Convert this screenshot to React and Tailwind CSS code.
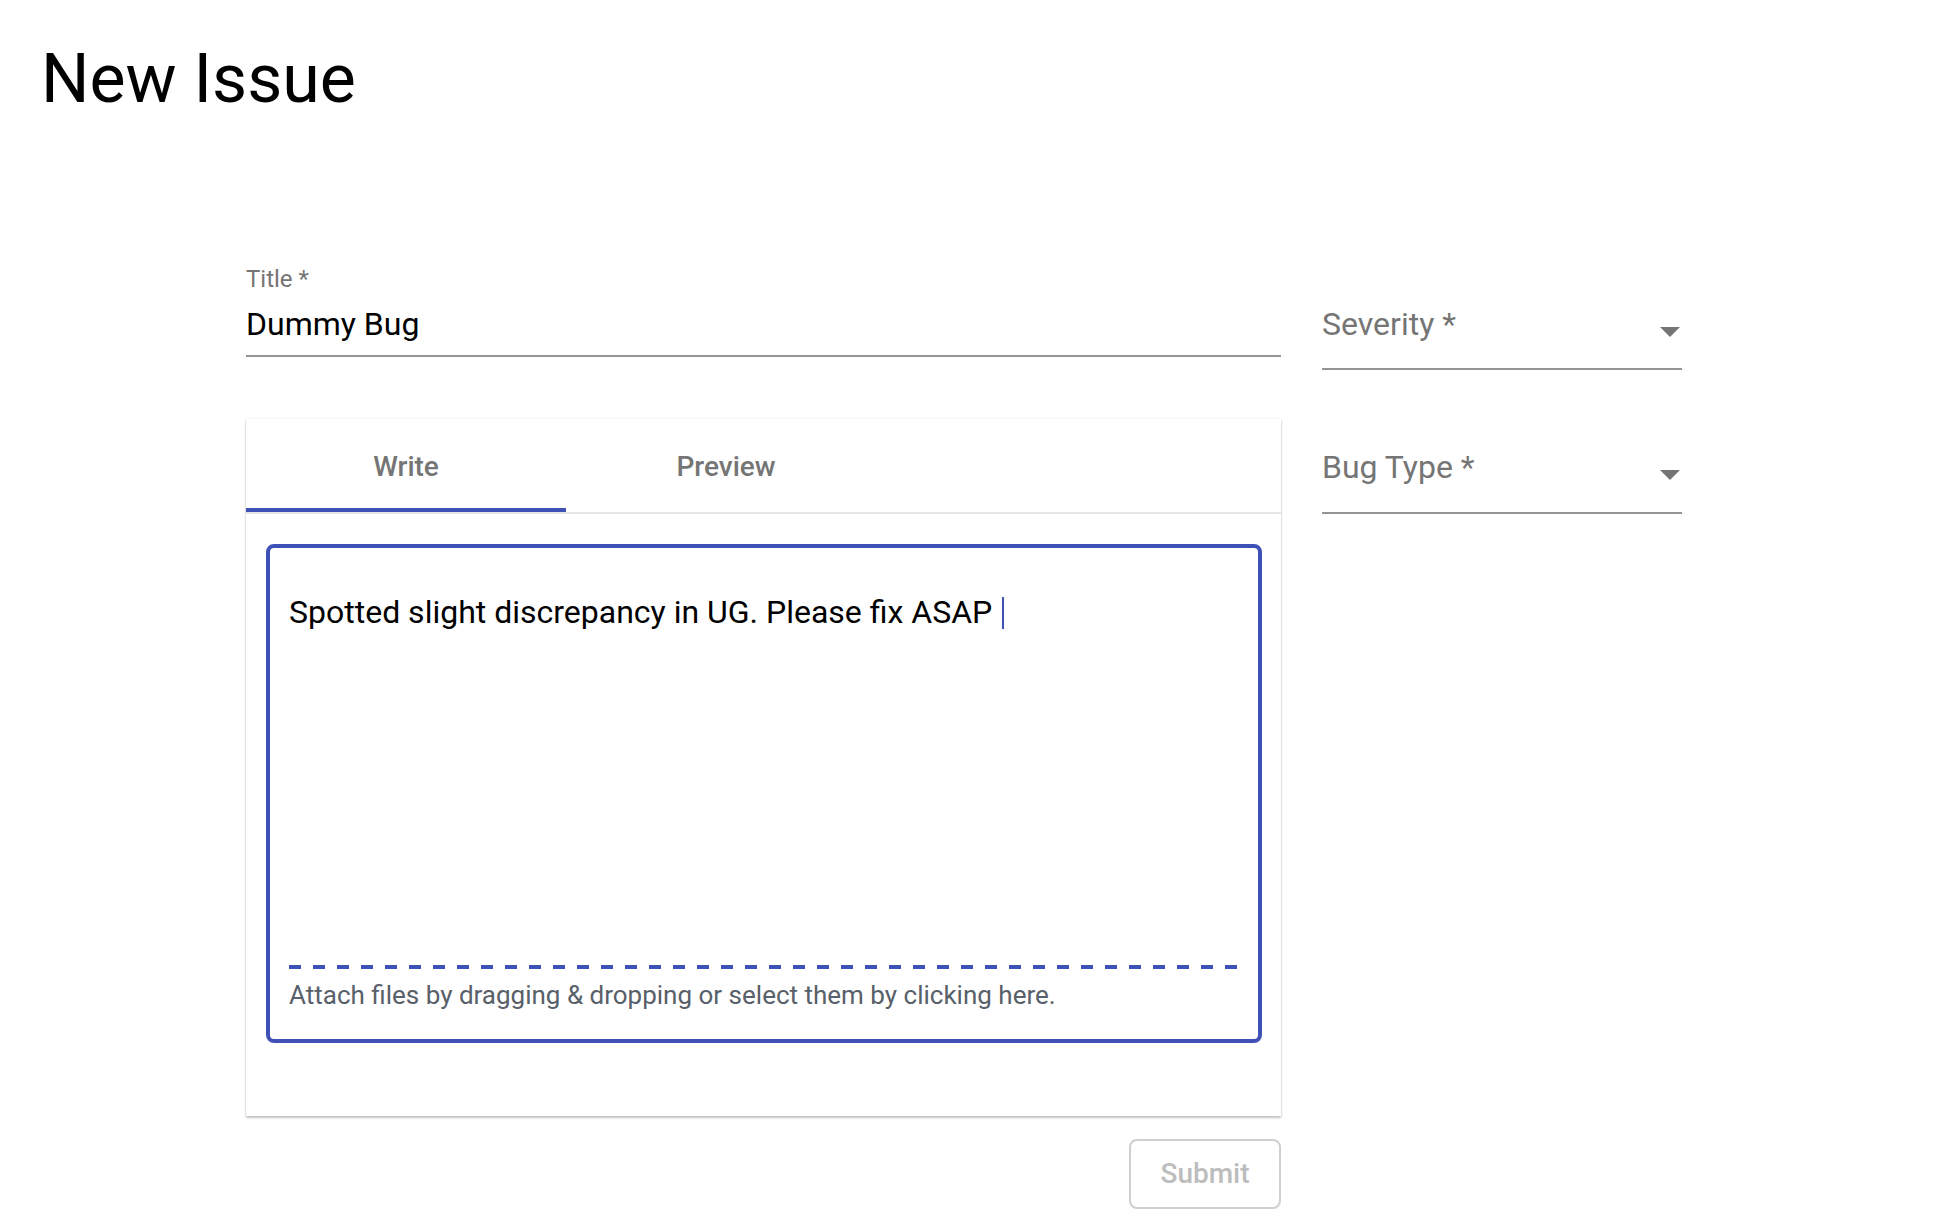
import { useState } from 'react';

function ArrowDrop() {
  return (
    <svg width="20" height="10" viewBox="0 0 20 10" className="absolute right-[2px]">
      <path d="M0 0 L20 0 L10 10 Z" fill="#757575" />
    </svg>
  );
}

export default function App() {
  const [tab, setTab] = useState('write');

  return (
    <div className="min-h-screen bg-white font-['Roboto','Liberation_Sans',sans-serif] text-black">
      {/* Header */}
      <h1 className="pl-[41px] pt-[39px] text-[68px] leading-[80px] font-normal">New Issue</h1>

      <div className="flex pl-[246px] mt-[148px]">
        {/* Left column */}
        <div className="w-[1035px]">
          {/* Title field */}
          <div>
            <div className="text-[24px] leading-[24px] text-[#757575]">Title *</div>
            <div className="mt-[14px] pb-[12px] border-b-2 border-[#949494] text-[32px] leading-[38px]">
              Dummy Bug
            </div>
          </div>

          {/* Editor card */}
          <div className="mt-[62px] bg-white pb-[73px] shadow-[0_2px_2px_rgba(0,0,0,0.22),0_0_2px_rgba(0,0,0,0.12)]">
            <div className="flex h-[95px] border-b-2 border-[#e6e6e6]">
              <button
                onClick={() => setTab('write')}
                className="relative w-[320px] h-full pt-[2px] text-[28px] font-medium text-[#757575]"
              >
                Write
                {tab === 'write' && <span className="absolute left-0 right-0 bottom-0 h-[4px] bg-[#3f51b5]"></span>}
              </button>
              <button
                onClick={() => setTab('preview')}
                className="relative w-[320px] h-full pt-[2px] text-[28px] font-medium text-[#757575]"
              >
                Preview
                {tab === 'preview' && <span className="absolute left-0 right-0 bottom-0 h-[4px] bg-[#3f51b5]"></span>}
              </button>
            </div>

            <div className="mt-[30px] ml-[20px] mr-[19px] border-4 border-[#3f51b5] rounded-lg">
              <div className="h-[417px] pl-[19px] pr-[17px] pt-[45px]">
                <div className="text-[32px] leading-[38px]">
                  Spotted slight discrepancy in UG. Please fix ASAP
                  <span className="inline-block w-[2px] h-[32px] bg-[#3f51b5] ml-[10px] align-[-6px]"></span>
                </div>
              </div>
              <div className="ml-[19px] mr-[17px] h-[4px] bg-[repeating-linear-gradient(to_right,#3f51b5_0px,#3f51b5_12px,transparent_12px,transparent_24px)]"></div>
              <div className="pl-[19px] pr-[17px] pt-[12px] pb-[30px] text-[26px] leading-[28px] text-[#586069]">
                Attach files by dragging &amp; dropping or select them by clicking here.
              </div>
            </div>
          </div>

          {/* Submit */}
          <div className="flex justify-end mt-[23px]">
            <button
              disabled
              className="w-[152px] h-[70px] border-2 border-[#cfcfcf] rounded-lg text-[28px] font-medium text-[#bdbdbd]"
            >
              Submit
            </button>
          </div>
        </div>

        {/* Right column */}
        <div className="ml-[41px] w-[360px]">
          <div className="relative mt-[38px] pb-[25px] border-b-2 border-[#949494] flex items-start">
            <span className="text-[32px] leading-[38px] text-[#757575]">Severity *</span>
            <span className="absolute right-0 top-[22px] w-[24px] h-[10px]"><ArrowDrop /></span>
          </div>
          <div className="relative mt-[78px] pb-[26px] border-b-2 border-[#949494] flex items-start">
            <span className="text-[32px] leading-[38px] text-[#757575]">Bug Type *</span>
            <span className="absolute right-0 top-[22px] w-[24px] h-[10px]"><ArrowDrop /></span>
          </div>
        </div>
      </div>
    </div>
  );
}
